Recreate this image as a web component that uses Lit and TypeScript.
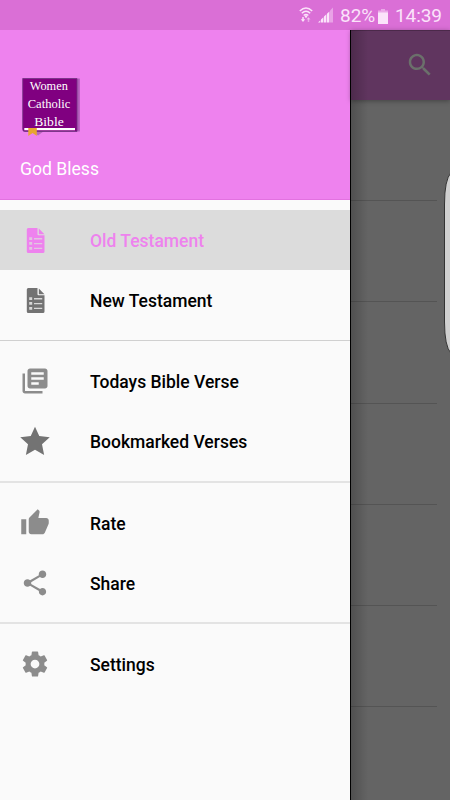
import { LitElement, html, css, svg } from "lit";
import { customElement } from "lit/decorators.js";
import { classMap } from "lit/directives/class-map.js";

const docIcon = svg`<svg class="i" width="30" height="30" viewBox="0 0 30 30"><path fill="currentColor" fill-rule="evenodd" d="M8.300 3H17.500V9.200Q17.500 10.300 18.600 10.300H24.500V26.500Q24.500 28 23 28H8.300Q6.800 28 6.800 26.500V4.500Q6.800 3 8.300 3ZM9.200 12.200V15H12.200V12.200ZM14 13.100V14.400H22.200V13.100ZM9.200 17V19.800H12.200V17ZM14 17.900V19.200H22.200V17.900ZM9.200 21.900V24.700H12.200V21.900ZM14 22.800V24.100H22.200V22.800Z"/><path fill="currentColor" d="M18.800 3.400L24.500 9.200H18.800Z"/><path fill="currentColor" opacity=".25" d="M9 12h13.200v13H9Z"/></svg>`;
const material = (d: string) =>
  svg`<svg class="i" width="30" height="30" viewBox="0 0 24 24"><path fill="currentColor" d=${d}/></svg>`;

const library = material("M4 6H2v14c0 1.100.9 2 2 2h14v-2H4V6zm16-4H8c-1.100 0-2 .9-2 2v12c0 1.100.9 2 2 2h12c1.100 0 2-.9 2-2V4c0-1.100-.9-2-2-2zm-1 9H9V9h10v2zm-4 4H9v-2h6v2zm4-8H9V5h10v2z");
const star = material("M12 .6l3.400 7.400 8.400.9-6.200 5.600 1.700 8.700-7.300-4.300-7.300 4.300 1.700-8.700L.2 8.900l8.400-.9z");
const thumb = material("M1 21h4V9H1v12zm22-11c0-1.100-.9-2-2-2h-6.310l.95-4.570.03-.32c0-.41-.17-.79-.44-1.060L14.170 1 7.590 7.590C7.220 7.950 7 8.450 7 9v10c0 1.100.9 2 2 2h9c.83 0 1.540-.5 1.840-1.220l3.020-7.050c.09-.23.14-.47.14-.73v-2z");
const share = material("M18 16.080c-.76 0-1.440.3-1.960.77L8.910 12.700c.05-.23.09-.46.09-.7s-.04-.47-.09-.7l7.050-4.110c.54.5 1.250.81 2.040.81 1.660 0 3-1.340 3-3s-1.340-3-3-3-3 1.340-3 3c0 .24.04.47.09.7L8.040 9.810C7.500 9.310 6.790 9 6 9c-1.660 0-3 1.340-3 3s1.340 3 3 3c.79 0 1.500-.31 2.040-.81l7.120 4.160c-.05.21-.08.43-.08.65 0 1.610 1.310 2.920 2.920 2.920s2.920-1.310 2.920-2.920-1.310-2.920-2.920-2.920z");
const gear = material("M19.430 12.980c.04-.32.07-.64.07-.98s-.03-.66-.07-.98l2.110-1.650c.19-.15.24-.42.12-.64l-2-3.460c-.12-.22-.39-.3-.61-.22l-2.490 1c-.52-.4-1.080-.73-1.690-.98l-.38-2.650C14.460 2.180 14.250 2 14 2h-4c-.25 0-.46.18-.49.42l-.38 2.650c-.61.25-1.170.59-1.690.98l-2.490-1c-.23-.09-.49 0-.61.22l-2 3.460c-.13.22-.07.49.12.64l2.110 1.650c-.04.32-.07.65-.07.98s.03.66.07.98l-2.110 1.650c-.19.15-.24.42-.12.64l2 3.460c.12.22.39.3.61.22l2.490-1c.52.4 1.080.73 1.690.98l.38 2.650c.03.24.24.42.49.42h4c.25 0 .46-.18.49-.42l.38-2.650c.61-.25 1.170-.59 1.690-.98l2.490 1c.23.09.49 0 .61-.22l2-3.460c.12-.22.07-.49-.12-.64l-2.110-1.650zM12 15.500c-1.930 0-3.500-1.570-3.500-3.500s1.570-3.500 3.500-3.500 3.500 1.570 3.500 3.500-1.570 3.500-3.500 3.500z");

interface Item { label: string; icon: unknown; tone: string; selected?: boolean; }

const groups: Item[][] = [
  [
    { label: "Old Testament", icon: docIcon, tone: "dark", selected: true },
    { label: "New Testament", icon: docIcon, tone: "dark" },
  ],
  [
    { label: "Todays Bible Verse", icon: library, tone: "light" },
    { label: "Bookmarked Verses", icon: star, tone: "dark" },
  ],
  [
    { label: "Rate", icon: thumb, tone: "light" },
    { label: "Share", icon: share, tone: "light" },
  ],
  [{ label: "Settings", icon: gear, tone: "light" }],
];

@customElement("app-root")
export class AppRoot extends LitElement {
  static styles = css`
    :host { display: flex; flex-direction: column; width: 450px; height: 800px; overflow: hidden; background: #646464; font-family: Roboto, sans-serif; }
    svg { display: block; }
    .status { flex: none; height: 30px; background: #da6fd6; color: #fbe3fa; display: flex; align-items: center; justify-content: flex-end; padding-right: 9px; box-sizing: border-box; font-size: 19px; line-height: 30px; }
    .wifi { margin-right: 5px; }
    .signal { margin-right: 6px; }
    .battery { margin: 2px 7px 0 4px; }
    .pct, .time { white-space: nowrap; padding-top: 2px; }
    .pct { width: 34px; }
    .time { width: 46px; letter-spacing: -.1px; }
    .stage { display: flex; height: 770px; }
    .drawer { width: 350px; flex: none; background: #fafafa; }
    .head { height: 170px; box-sizing: border-box; background: #ee82ee; border-bottom: 1px solid #e272e0; padding: 47px 0 0 20px; }
    .blessing { color: #fff; font-size: 17.600px; line-height: 22px; margin-top: 19px; }
    .group { padding: 10px 0; }
    .group + .group { border-top: 1px solid #d0d0d0; }
    .group + .group + .group { border-top: 2px solid #e3e3e3; padding-bottom: 9px; }
    .group + .group + .group + .group { padding-top: 10px; }
    .row { height: 60px; display: flex; align-items: center; padding-left: 20px; gap: 40px; font-size: 17.500px; font-weight: 500; color: #000; }
    .row span { padding-top: 2px; }
    .row .i { flex: none; }
    .dark .i { color: #737373; }
    .light .i { color: #8c8c8c; }
    .selected { background: #dcdcdc; color: #ee82ee; }
    .selected .i { color: #ee82ee; }
    .page { position: relative; width: 100px; box-sizing: border-box; border-left: 1px solid #000; }
    .page::after { content: ""; position: absolute; inset: 0 auto 0 0; width: 17px; background: linear-gradient(90deg, rgba(0,0,0,.2), transparent); }
    .bar { height: 70px; box-sizing: border-box; background: #60355f; border-top: 1px solid #4b294a; color: #6b706b; display: flex; align-items: center; justify-content: flex-end; padding: 0 15px 2px 0; box-shadow: 0 1px 5px rgba(0,0,0,.35); }
    .cell { height: 101.200px; box-sizing: border-box; border-bottom: 1px solid #545454; margin-right: 13px; }
    .handle { position: absolute; right: 0; top: 142px; width: 6px; height: 182px; }
  `;

  render() {
    return html`
      <div class="status">
        <svg class="wifi" width="14" height="18" viewBox="0 0 14 18" fill="none" stroke="currentColor" stroke-width="1.500"><path d="M.8 5Q7-1 13.200 5M2.800 7.300Q7 3.200 11.200 7.300M4.700 9.500Q7 7.500 9.300 9.500"/><path d="M4 11v4" /><path d="M9.500 12v4" opacity=".5"/><path d="M1.800 13.200h4.400L4 16z" fill="currentColor" stroke="none"/><path d="M7.500 13.500h4L9.500 11z" fill="currentColor" stroke="none" opacity=".5"/><circle cx="7" cy="10.500" r="1.200" fill="currentColor" stroke="none"/></svg>
        <svg class="signal" width="16" height="16" viewBox="0 0 16 16" fill="currentColor"><path d="M0 15.500L2.400 13.200V15.500ZM3 12.500l2.400-2.300v5.300H3ZM6 9.600l2.400-2.300v8.200H6ZM9 6.700l2.400-2.300v11.100H9Z"/><path opacity=".45" d="M12 3.500l3-3v15h-3Z"/></svg>
        <span class="pct">82%</span>
        <svg class="battery" width="10" height="15" viewBox="0 0 10 15" fill="currentColor"><path opacity=".5" d="M3 0h4v1.500h3V4H0V1.500h3Z"/><path d="M0 3.500h10V15H0Z"/></svg>
        <span class="time">14:39</span>
      </div>
      <div class="stage">
        <div class="drawer">
          <div class="head">
            <svg width="62" height="62" viewBox="20 77 62 62"><path fill="#b25bbb" d="M77 78.500h2.800V131.500H77Z"/><path fill="#b866bd" d="M31 131h13l-6 4.500Z"/><path fill="#800080" stroke="#6f3380" stroke-width=".8" d="M22.700 78.500H77V131.500H24.500Q22.700 131.500 22.700 129Z"/><path fill="#fff" d="M24.300 128h50.700v2.200H24.300Z"/><path fill="#e8a630" d="M28.300 128h8.500v8l-4.200-3-4.300 3Z"/><g fill="#fff" font-family="Liberation Serif, serif" text-anchor="middle"><text x="48.800" y="90" font-size="12" textLength="38" lengthAdjust="spacingAndGlyphs">Women</text><text x="49" y="108" font-size="12.500" textLength="42.500" lengthAdjust="spacingAndGlyphs">Catholic</text><text x="49" y="126" font-size="12.700" textLength="29.500" lengthAdjust="spacingAndGlyphs">Bible</text></g></svg>
            <div class="blessing">God Bless</div>
          </div>
          ${groups.map((g) => html`<div class="group">${g.map((i) => html`<div class=${classMap({ row: true, [i.tone]: true, selected: !!i.selected })}>${i.icon}<span>${i.label}</span></div>`)}</div>`)}
        </div>
        <div class="page">
          <div class="bar"><svg width="30" height="30" viewBox="0 0 24 24" fill="currentColor"><path d="M15.500 14h-.79l-.28-.27C15.410 12.590 16 11.110 16 9.500 16 5.910 13.090 3 9.500 3S3 5.910 3 9.500 5.910 16 9.500 16c1.610 0 3.090-.59 4.230-1.570l.27.28v.79l5 4.990L20.490 19l-4.990-5zm-6 0C7.010 14 5 11.990 5 9.500S7.010 5 9.500 5 14 7.010 14 9.500 11.990 14 9.500 14z"/></svg></div>
          ${Array.from({ length: 6 }, () => html`<div class="cell"></div>`)}
          <svg class="handle" viewBox="0 0 6 182"><path fill="#d0d0d0" stroke="#343434" d="M7 .5Q.5 8 .5 32V150Q.5 174 7 181.500Z"/></svg>
        </div>
      </div>`;
  }
}
